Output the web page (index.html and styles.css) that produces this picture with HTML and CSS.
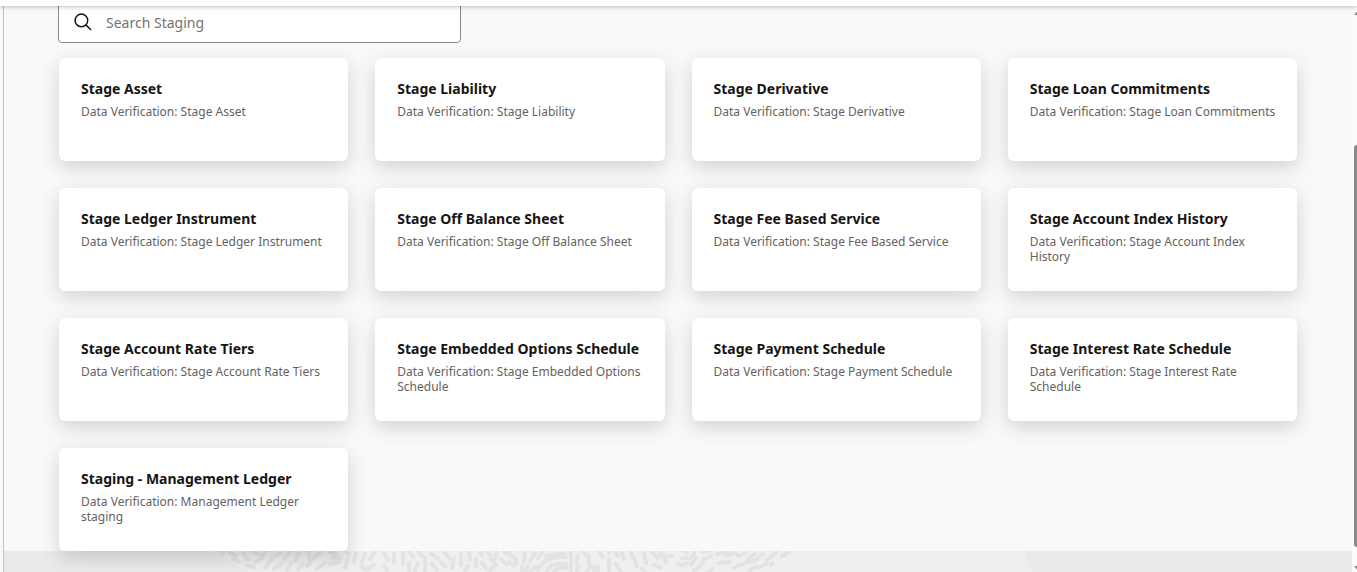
FILE: index.html
```
<!DOCTYPE html>
<html lang="en">
<head>
    <meta charset="UTF-8">
    <meta name="viewport" content="width=device-width, initial-scale=1.0">
    <title>Staging</title>
    <link rel="stylesheet" href="styles.css">
</head>
<body>
    <div class="page">
        <header class="topbar"></header>
        <div class="body-row">
            <main class="content">
                <div class="search-box">
                    <svg class="search-icon" viewBox="0 0 18 18" aria-hidden="true">
                        <circle cx="7.4" cy="7.4" r="6.3"/>
                        <path d="M11.9 11.9L17 17"/>
                    </svg>
                    <input type="text" id="search" placeholder="Search Staging" aria-label="Search Staging">
                </div>

                <div class="cards">
                    <a class="card" href="#"><h2>Stage Asset</h2><p>Data Verification: Stage Asset</p></a>
                    <a class="card" href="#"><h2>Stage Liability</h2><p>Data Verification: Stage Liability</p></a>
                    <a class="card" href="#"><h2>Stage Derivative</h2><p>Data Verification: Stage Derivative</p></a>
                    <a class="card" href="#"><h2>Stage Loan Commitments</h2><p>Data Verification: Stage Loan Commitments</p></a>
                    <a class="card" href="#"><h2>Stage Ledger Instrument</h2><p>Data Verification: Stage Ledger Instrument</p></a>
                    <a class="card" href="#"><h2>Stage Off Balance Sheet</h2><p>Data Verification: Stage Off Balance Sheet</p></a>
                    <a class="card" href="#"><h2>Stage Fee Based Service</h2><p>Data Verification: Stage Fee Based Service</p></a>
                    <a class="card" href="#"><h2>Stage Account Index History</h2><p>Data Verification: Stage Account Index History</p></a>
                    <a class="card" href="#"><h2>Stage Account Rate Tiers</h2><p>Data Verification: Stage Account Rate Tiers</p></a>
                    <a class="card" href="#"><h2>Stage Embedded Options Schedule</h2><p>Data Verification: Stage Embedded Options Schedule</p></a>
                    <a class="card" href="#"><h2>Stage Payment Schedule</h2><p>Data Verification: Stage Payment Schedule</p></a>
                    <a class="card" href="#"><h2>Stage Interest Rate Schedule</h2><p>Data Verification: Stage Interest Rate Schedule</p></a>
                    <a class="card" href="#"><h2>Staging - Management Ledger</h2><p>Data Verification: Management Ledger staging</p></a>
                </div>

                <footer class="footer">
                    <svg class="pattern" viewBox="4 551 1036 21" aria-hidden="true">
                        <path class="pattern-bg" d="M212 551H1024L1032 572H250Z"/>
                        <path class="pattern-dashes" d="M218 551l5 3M229 552l7 4M233 559l6 3M243 553l5 7M246 565l8 2M254 552l6 3M262 558l-7 4M266 551l-3 5M271 560l-6 8M280 553l-8 5M281 564l-7 5M290 552l-6 7M291 563l-4 7M299 553l-4 8M303 564l-5 6M309 552v8M315 556l-8 10M321 552l-7 6M325 563l-8 6M330 552l7 3M341 558h-9M330 564l9-2M345 551l4 3M348 559l-3 9M356 553l-2 9M361 566l6 5M365 554l-3 8M375 552l-5 7M374 565l-8 5M384 553l4 7M384 565l3 5M394 554v8"/>
                        <path class="pattern-dashes" d="M403 552v12M409 551l4 6M409 563v8M418 551l4 5M418 563l-3 8M425 558v15M431 554l7 4M432 563l5 7M440 562l6 5M445 553l5 6M454 558l-2 10M461 554v11M469 551l1 9M468 566l-3 5M476 559v8M480 551l2 4M482 563l4 5M487 551l3 4M497 553l-2 6M491 559l4 5M496 565q-5 3-7 7M504 551l2 3M501 559l5 5M508 552l3 4M509 562l5 4M514 557l3 6M525 552l-1 10M522 566v6M535 553l-5 8M528 566l-2 6M543 551l-5 7M536 566l-5 5M546 556l9-2h10M538 570q3-7 10-11M551 559q8-3 15-2M547 571q3-7 11-7h8M554 571l5-3h8M571 552v9M571 564v8M578 555l-2 8M583 551l3 5M589 555v8M578 566l-1 5M591 566l-5 7M594 567v5M598 566v6M599 552l4 5M609 559v12M609 551v2M615 551l3 5M622 553l2 6M616 564l5 8M631 551l1 5M634 558l3 9M644 553l2 10M642 569l3 3M651 551l7 7M654 565l7 3M661 554l5 8M659 552l5 4h8M678 564q4 3 9-1M684 551l3 2M682 558h5M694 552v3l-4 4M691 565l5-7M694 571l9-8M703 552l8-2M704 559l7-3M712 569l-5 4M717 554l12-2M719 563l11-1M726 556l10-3M738 556l8-3M734 568l8-4M743 564l8-3h4M748 559l7-5M763 554l-7 6M749 571l7-4M758 568l9-5M767 560l8-6M777 551l-3 3M782 556l7-4M771 565l2-2"/>
                    </svg>
                </footer>
            </main>
            <div class="scrollbar" aria-hidden="true">
                <span class="arrow arrow-up"></span>
                <span class="thumb"></span>
                <span class="arrow arrow-down"></span>
            </div>
        </div>
    </div>
</body>
</html>
```
FILE: styles.css
```
* {
    box-sizing: border-box;
}
body {
    margin: 0;
    font-family: 'Noto Sans', sans-serif;
    color: #161513;
    background-color: #fbf9f8;
}
.page {
    display: flex;
    flex-direction: column;
    height: 100vh;
    overflow: hidden;
}
.topbar {
    flex: none;
    height: 6px;
    background-color: #fff;
    box-shadow: 0 1px 4px rgba(0, 0, 0, 0.25);
    z-index: 2;
}
.body-row {
    display: flex;
    flex: 1;
    min-height: 0;
    padding-left: 3px;
}
.content {
    flex: 1;
    display: flex;
    flex-direction: column;
    border-left: 1px solid #c4c3c2;
    overflow: hidden;
}
.search-box {
    display: flex;
    flex: none;
    align-items: center;
    gap: 14px;
    width: 403px;
    height: 44px;
    margin: -7px 0 0 54px;
    padding: 0 15px;
    background-color: #fff;
    border: 1px solid #8b8987;
    border-radius: 4px;
}
.search-icon {
    width: 18px;
    height: 18px;
    margin-top: 1px;
    fill: none;
    stroke: #161513;
    stroke-width: 1.5;
}
.search-box input {
    flex: 1;
    padding: 2px 0 0;
    border: none;
    outline: none;
    font-family: inherit;
    font-size: 14px;
    color: #161513;
    background: none;
}
.search-box input::placeholder {
    color: #76726f;
}
.cards {
    display: grid;
    grid-template-columns: repeat(4, 1fr);
    grid-auto-rows: 103px;
    gap: 27px;
    padding: 15px 55px 0;
    z-index: 1;
}
.card {
    padding: 21px 20px 21px 22px;
    background-color: #fff;
    border-radius: 6px;
    box-shadow: 0 6px 20px rgba(0, 0, 0, 0.16);
    color: inherit;
    text-decoration: none;
}
.card h2 {
    margin: 0 0 5px;
    font-size: 14px;
    line-height: 20px;
    font-weight: 700;
}
.card p {
    margin: 0;
    font-size: 12px;
    line-height: 15px;
    color: #65625f;
}
.footer {
    flex: 1;
    background-color: #ebeae9;
}
.pattern {
    display: block;
    width: 1036px;
    height: 21px;
}
.pattern-bg {
    fill: #f0efee;
}
.pattern-dashes {
    fill: none;
    stroke: #e4e3e2;
    stroke-width: 4;
    stroke-linecap: round;
}
.scrollbar {
    display: flex;
    flex-direction: column;
    width: 5px;
    padding: 4px 0 0 2px;
    background-color: #fcfcfc;
    overflow: hidden;
}
.thumb {
    flex: none;
    width: 6px;
    height: 402px;
    margin-top: 130px;
    border-radius: 3px;
    background-color: #8b8b8b;
}
.arrow {
    width: 8px;
    height: 5px;
    background-color: #8b8b8b;
}
.arrow-up {
    clip-path: polygon(50% 0, 100% 100%, 0 100%);
}
.arrow-down {
    margin-top: 19px;
    clip-path: polygon(0 0, 100% 0, 50% 100%);
}
```
